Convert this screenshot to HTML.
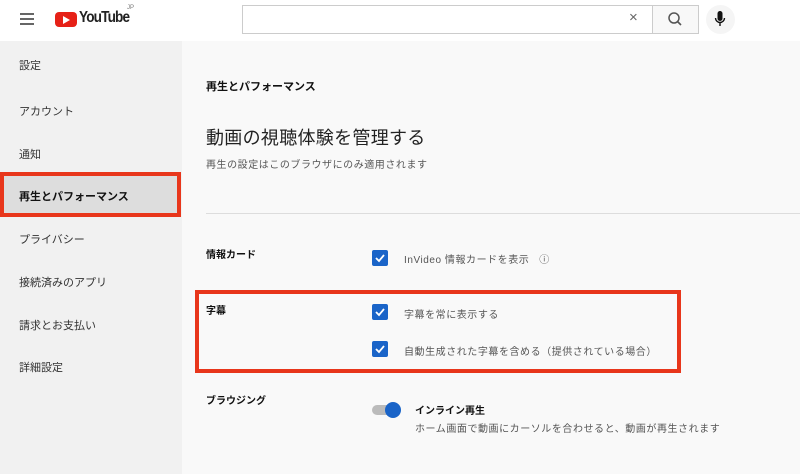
<!DOCTYPE html><html><head><meta charset="utf-8"><style>
*{margin:0;padding:0;box-sizing:border-box}
body{width:800px;height:474px;overflow:hidden;background:#f9f9f9;font-family:"Liberation Sans","Noto Sans CJK JP",sans-serif;color:#111;position:relative}
.a{position:absolute;white-space:nowrap}
.hdr{left:0;top:0;width:800px;height:41px;background:#fff}
.side{left:0;top:41px;width:182px;height:433px;background:#f1f1f1}
.si{left:19px;font-size:11px;color:#333}
.cb{width:16px;height:16px;background:#1a64c8;border-radius:2px}
.t{font-size:10px;color:#555;letter-spacing:.55px}
</style></head><body>
<div class="a hdr"></div>
<div class="a" style="left:20px;top:13px;width:14px;height:2px;background:#666;box-shadow:0 5px 0 #666,0 10px 0 #666"></div>
<div class="a" style="left:55px;top:12px;width:22px;height:15px;background:#e62117;border-radius:4px"></div>
<div class="a" style="left:63px;top:15.5px;width:0;height:0;border-left:7px solid #fff;border-top:4px solid transparent;border-bottom:4px solid transparent"></div>
<div class="a" style="left:79px;top:9px;font-size:16px;font-weight:bold;letter-spacing:-1px;color:#222;transform:scaleX(.85);transform-origin:left">YouTube</div>
<div class="a" style="left:127px;top:5px;font-size:6px;color:#777">JP</div>
<div class="a" style="left:242px;top:5px;width:411px;height:29px;border:1px solid #ccc;background:#fff"></div>
<div class="a" style="left:629px;top:9px;font-size:15px;color:#666">×</div>
<div class="a" style="left:652px;top:5px;width:47px;height:29px;border:1px solid #ccc;background:#f8f8f8"></div>
<svg class="a" style="left:666px;top:10px" width="18" height="18" viewBox="0 0 18 18"><circle cx="8" cy="8" r="5" fill="none" stroke="#555" stroke-width="1.5"/><path d="M11.5 11.5 15 15" stroke="#555" stroke-width="1.6"/></svg>
<div class="a" style="left:706px;top:5px;width:29px;height:29px;border-radius:50%;background:#f5f5f5"></div>
<svg class="a" style="left:713px;top:10px" width="14" height="18" viewBox="0 0 14 18"><rect x="4.5" y="1" width="5" height="10" rx="2.5" fill="#111"/><path d="M2.5 8a4.5 4.5 0 0 0 9 0M7 12.5V16" stroke="#111" stroke-width="1.4" fill="none"/></svg>
<div class="a side"></div>
<div class="a" style="left:0;top:172px;width:181px;height:45px;background:#ddd;border:4px solid #e8361b"></div>
<div class="a si" style="top:57px">設定</div>
<div class="a si" style="top:103px">アカウント</div>
<div class="a si" style="top:146px">通知</div>
<div class="a si" style="top:188px;color:#111;font-weight:bold">再生とパフォーマンス</div>
<div class="a si" style="top:231px">プライバシー</div>
<div class="a si" style="top:274px">接続済みのアプリ</div>
<div class="a si" style="top:317px">請求とお支払い</div>
<div class="a si" style="top:359px">詳細設定</div>
<div class="a" style="left:206px;top:78px;font-size:11px;font-weight:bold">再生とパフォーマンス</div>
<div class="a" style="left:206px;top:124px;font-size:18px;color:#222;letter-spacing:.3px">動画の視聴体験を管理する</div>
<div class="a t" style="left:206px;top:156px">再生の設定はこのブラウザにのみ適用されます</div>
<div class="a" style="left:206px;top:213px;width:594px;height:1px;background:#ddd"></div>
<div class="a" style="left:206px;top:246px;font-size:10px;font-weight:bold">情報カード</div>
<div class="a cb" style="left:372px;top:250px"></div>
<div class="a t" style="left:404px;top:251px">InVideo 情報カードを表示 &nbsp; ⓘ</div>
<div class="a" style="left:195px;top:290px;width:486px;height:83px;border:4px solid #e8361b"></div>
<div class="a" style="left:206px;top:302px;font-size:10px;font-weight:bold">字幕</div>
<div class="a cb" style="left:372px;top:304px"></div>
<div class="a t" style="left:404px;top:306px">字幕を常に表示する</div>
<div class="a cb" style="left:372px;top:341px"></div>
<div class="a t" style="left:404px;top:343px">自動生成された字幕を含める（提供されている場合）</div>
<div class="a" style="left:206px;top:392px;font-size:10px;font-weight:bold">ブラウジング</div>
<div class="a" style="left:372px;top:405px;width:26px;height:10px;border-radius:5px;background:#bbb"></div>
<div class="a" style="left:385px;top:402px;width:16px;height:16px;border-radius:50%;background:#1a64c8"></div>
<div class="a" style="left:415px;top:402px;font-size:10px;font-weight:bold">インライン再生</div>
<div class="a t" style="left:415px;top:420px">ホーム画面で動画にカーソルを合わせると、動画が再生されます</div>
<svg class="a" style="left:375px;top:253px" width="10" height="10"><path d="M1 5l3 3 5-6" stroke="#fff" stroke-width="1.8" fill="none"/></svg>
<svg class="a" style="left:375px;top:307px" width="10" height="10"><path d="M1 5l3 3 5-6" stroke="#fff" stroke-width="1.8" fill="none"/></svg>
<svg class="a" style="left:375px;top:344px" width="10" height="10"><path d="M1 5l3 3 5-6" stroke="#fff" stroke-width="1.8" fill="none"/></svg>
</body></html>
